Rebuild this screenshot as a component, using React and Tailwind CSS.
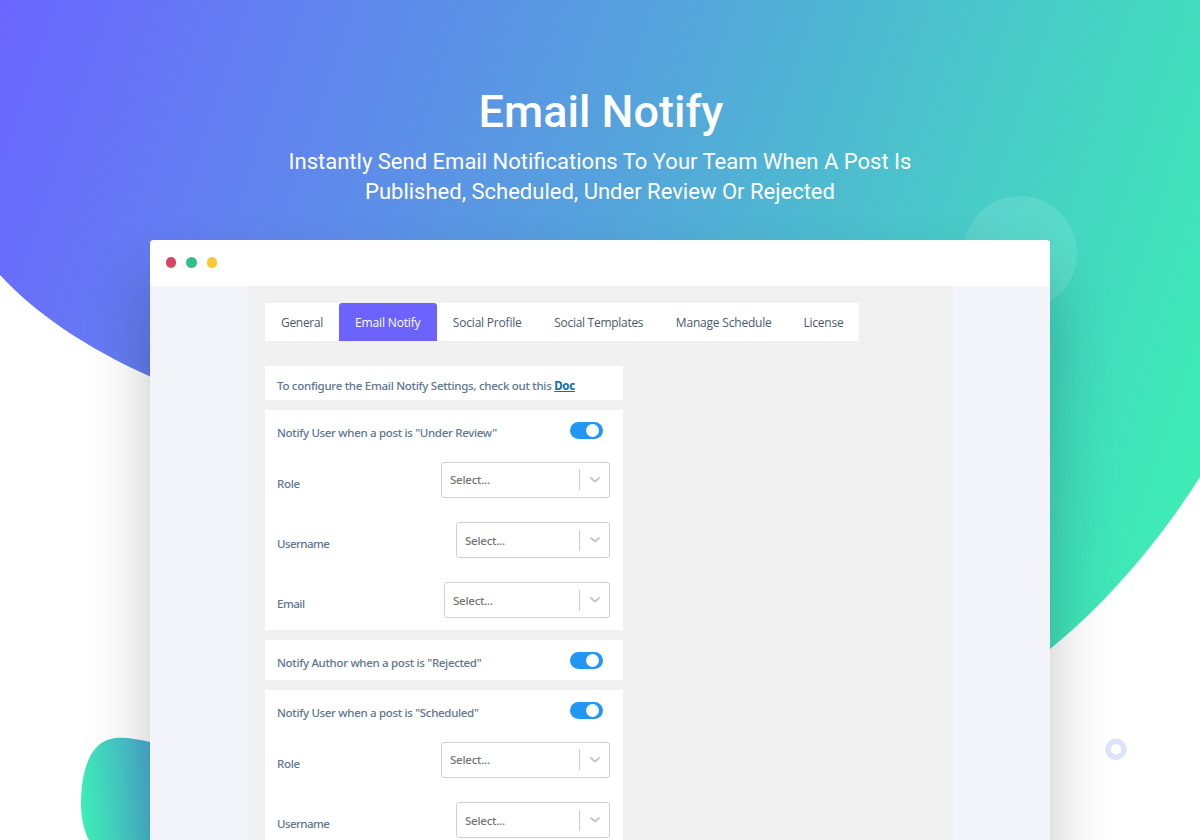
const tabs = [
  { label: 'General', width: 'w-[74px]', tracking: 'tracking-[-0.3px]' },
  { label: 'Email Notify', width: 'w-[97.5px]', tracking: 'tracking-[-0.15px]', active: true },
  { label: 'Social Profile', width: 'w-[101.5px]', tracking: 'tracking-[-0.2px]' },
  { label: 'Social Templates', width: 'w-[121.5px]', tracking: 'tracking-[-0.28px]' },
  { label: 'Manage Schedule', width: 'w-[128.5px]', tracking: 'tracking-[-0.2px]' },
  { label: 'License', width: 'w-[71px]', tracking: 'tracking-[-0.25px]' },
];

function Backdrop() {
  return (
    <svg className="absolute inset-0" width="1200" height="840" viewBox="0 0 1200 840" aria-hidden="true">
      <defs>
        <linearGradient id="sky" gradientUnits="userSpaceOnUse" x1="0" y1="0" x2="1210" y2="400">
          <stop offset="0" stopColor="#6c66ff" />
          <stop offset="0.5" stopColor="#55a3dc" />
          <stop offset="0.84" stopColor="#45d5c2" />
          <stop offset="1" stopColor="#3eebb5" />
        </linearGradient>
        <linearGradient id="blob" gradientUnits="userSpaceOnUse" x1="81" y1="800" x2="175" y2="788">
          <stop offset="0" stopColor="#3eecb5" />
          <stop offset="1" stopColor="#4f9fdc" />
        </linearGradient>
      </defs>
      <path
        d="M0 0H1200V477C1160 540 1108 602 1049 650C900 740 600 560 400 470C310 438 220 408 149 376C85 347 35 313 0 275Z"
        fill="url(#sky)"
      />
      <circle cx="1020" cy="253" r="57" fill="#fff" fillOpacity="0.11" />
      <path
        d="M150 742C128 737 112 735 100 744C86 755 81 780 81 803C81 818 84 831 89 840H200V752Z"
        fill="url(#blob)"
      />
      <circle cx="1116" cy="749.3" r="8" fill="none" stroke="#dfe3fa" strokeWidth="5.4" />
    </svg>
  );
}

function Toggle() {
  return (
    <div className="flex h-[17.5px] w-[33px] items-center justify-end rounded-full bg-[#2196f3] pr-1">
      <div className="size-[13px] rounded-full bg-white" />
    </div>
  );
}

function Select({ width }) {
  return (
    <div className={`flex h-9 items-center rounded-[3px] border border-[#d0d0d0] bg-white ${width}`}>
      <span className="flex-1 pt-px pl-2 text-[11.5px] leading-4 font-medium tracking-[-0.25px] text-[#757575]">Select...</span>
      <div className="h-[21px] w-px bg-[#ccc]" />
      <svg className="mr-[9px] ml-2.5" width="10" height="6" viewBox="0 0 10 6" fill="none" stroke="#c4c4c4" strokeWidth="1.8" strokeLinecap="round" strokeLinejoin="round">
        <path d="M1 1L5 4.6L9 1" />
      </svg>
    </div>
  );
}

function Field({ label, width, tracking = 'tracking-[-0.3px]' }) {
  return (
    <div className="mb-[24.3px] flex h-9 items-center justify-between">
      <span className={`pt-[8px] leading-4 ${tracking}`}>{label}</span>
      <Select width={width} />
    </div>
  );
}

function Heading({ children }) {
  return (
    <div className="flex items-start justify-between pt-[11.5px] pr-[7.5px]">
      <span className="pt-[3.5px] leading-4">{children}</span>
      <Toggle />
    </div>
  );
}

export default function App() {
  return (
    <div className="relative h-[840px] w-[1200px] overflow-hidden bg-white font-['Roboto',sans-serif]">
      <Backdrop />
      <div className="relative flex h-full flex-col items-center">
        <header className="h-[240px] shrink-0 pt-[85px] text-center text-white">
          <h1 className="pl-[2px] text-[45px] leading-[54px] font-medium">Email Notify</h1>
          <p className="mt-2 text-[22.03px] leading-[30px]">
            Instantly Send Email Notifications To Your Team When A Post Is
            <br />
            Published, Scheduled, Under Review Or Rejected
          </p>
        </header>

        <main className="mt-[0.4px] h-[700px] w-[900px] shrink-0 rounded-[4px] bg-[#f3f4fa] shadow-[0_40px_64px_rgba(0,0,0,0.23)]">
          <div className="flex h-[45.6px] items-center gap-[10px] rounded-[4px] bg-white pb-[1px] pl-[15.5px]">
            <i className="size-[10.5px] rounded-full bg-[#d94665]" />
            <i className="size-[10.5px] rounded-full bg-[#32be87]" />
            <i className="size-[10.5px] rounded-full bg-[#f9c830]" />
          </div>

          <div className="ml-[98px] h-[660px] w-[705px] bg-[#f0f0f0] pt-[17px] pl-[17px] font-['Noto_Sans','Open_Sans',sans-serif] text-[11.5px] text-[#60758f]">
            <nav className="flex h-[38.5px] w-[594px] bg-white text-[12px] text-[#4c5a6b]">
              {tabs.map((t) => (
                <div
                  key={t.label}
                  className={`flex items-center justify-center pt-[1.5px] font-['Open_Sans',sans-serif] whitespace-nowrap ${t.width} ${t.tracking} ${t.active ? 'rounded-t-[3px] bg-[#6c63ff] text-white' : ''}`}
                >
                  {t.label}
                </div>
              ))}
            </nav>

            <div className="mt-[24.3px] flex w-[358px] flex-col gap-[10px] font-medium tracking-[-0.32px] whitespace-nowrap">
              <section className="h-[34.5px] bg-white pt-3 pl-3 leading-4 tracking-[-0.28px]">
                To configure the Email Notify Settings, check out this{' '}
                <a className="font-bold text-[#0d6fa5] underline">Doc</a>
              </section>
              <section className="h-[220px] bg-white pr-[13px] pl-3">
                <Heading>Notify User when a post is "Under Review"</Heading>
                <div className="mt-[20.5px]">
                  <Field label="Role" width="w-[169px]" />
                  <Field label="Username" width="w-[154px]" tracking="tracking-[-0.55px]" />
                  <Field label="Email" width="w-[166px]" tracking="tracking-[-0.5px]" />
                </div>
              </section>
              <section className="h-[40px] bg-white pr-[13px] pl-3">
                <Heading>Notify Author when a post is "Rejected"</Heading>
              </section>
              <section className="h-[230px] bg-white pr-[13px] pl-3">
                <Heading>Notify User when a post is "Scheduled"</Heading>
                <div className="mt-[20.5px]">
                  <Field label="Role" width="w-[169px]" />
                  <Field label="Username" width="w-[154px]" tracking="tracking-[-0.55px]" />
                </div>
              </section>
            </div>
          </div>
        </main>
      </div>
    </div>
  );
}
